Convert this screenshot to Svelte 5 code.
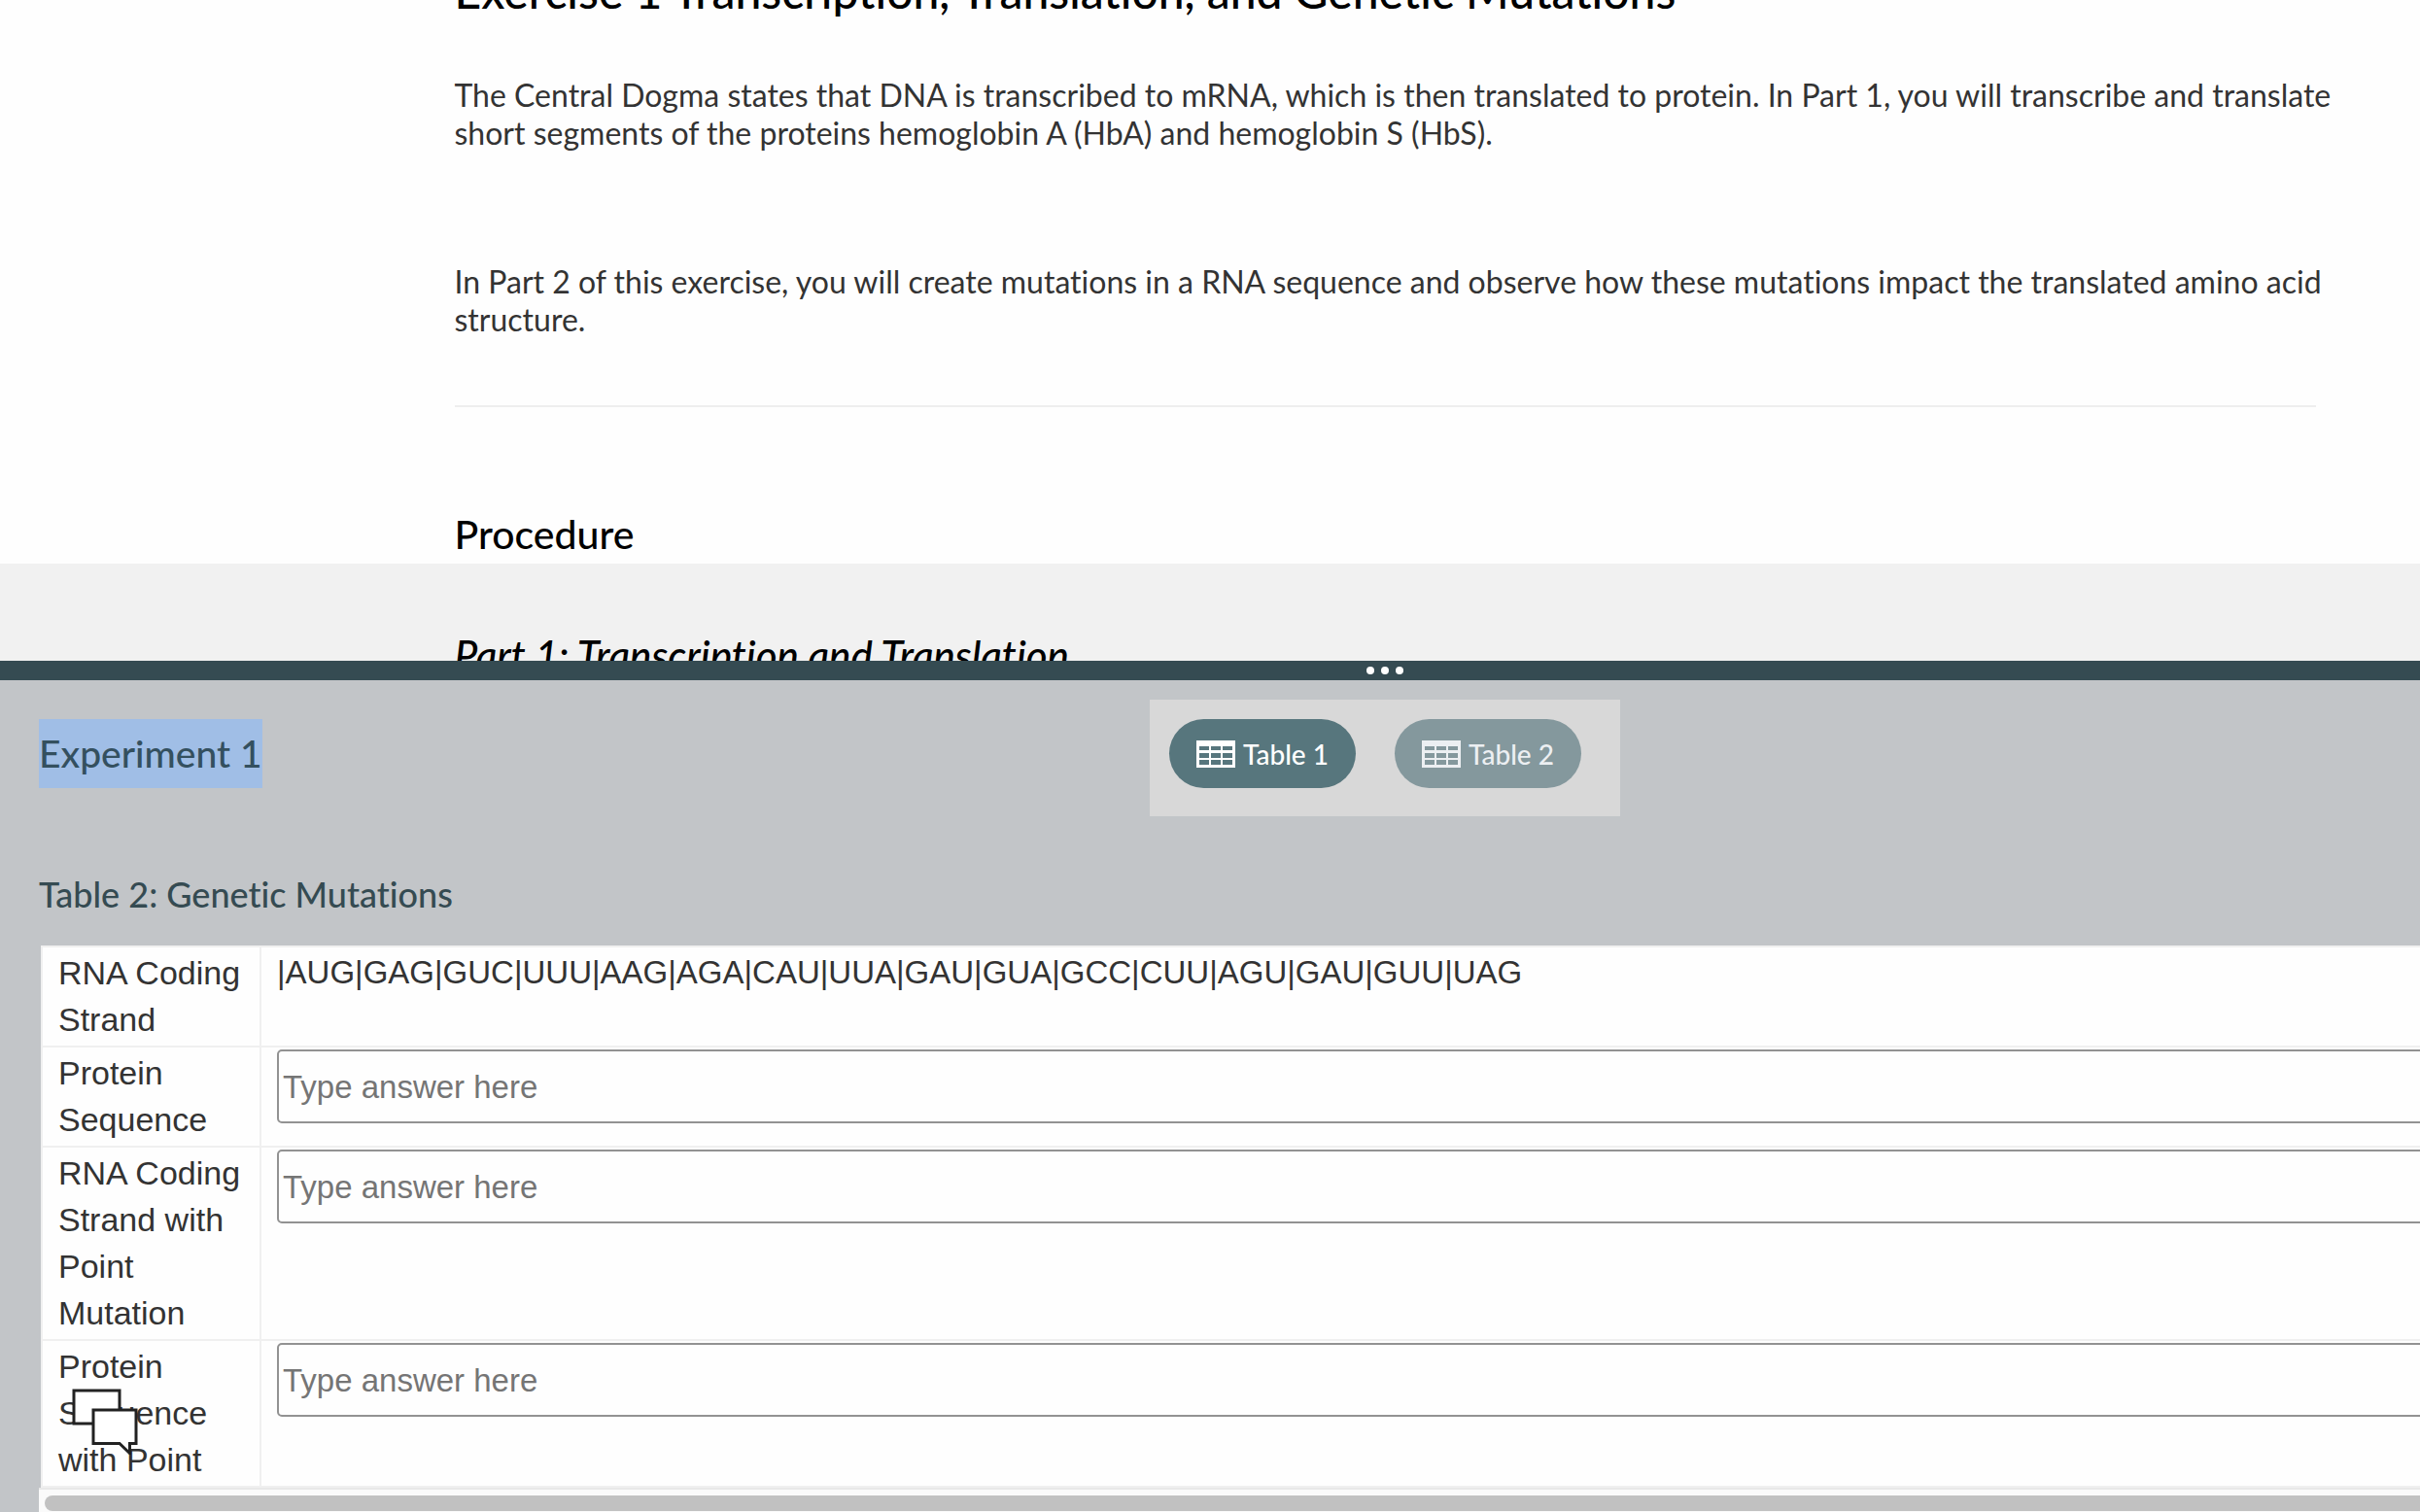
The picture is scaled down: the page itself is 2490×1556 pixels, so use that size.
<script>
	// share of the window height taken by the reading pane
	let split = 43.7;
	let active = 1;

	const tables = [
		{ id: 1, label: 'Table 1' },
		{ id: 2, label: 'Table 2' },
	];

	let rows = [
		{ id: 'coding', label: 'RNA Coding Strand', text: '|AUG|GAG|GUC|UUU|AAG|AGA|CAU|UUA|GAU|GUA|GCC|CUU|AGU|GAU|GUU|UAG' },
		{ id: 'protein', label: 'Protein Sequence', answer: '' },
		{ id: 'point', label: 'RNA Coding Strand with Point Mutation', answer: '' },
		{ id: 'protein-point', label: 'Protein Sequence with Point', answer: '' },
	];
</script>

<div class="window">
	<div class="page">
		<main class="reading" style="height: {split}%">
			<section class="intro">
				<div class="content">
					<h1>Exercise 1 Transcription, Translation, and Genetic Mutations</h1>
					<p>The Central Dogma states that DNA is transcribed to mRNA, which is then translated to protein. In Part 1, you will transcribe and translate short segments of the proteins hemoglobin A (HbA) and hemoglobin S (HbS).</p>
					<p>In Part 2 of this exercise, you will create mutations in a RNA sequence and observe how these mutations impact the translated amino acid structure.</p>
					<hr />
					<h2>Procedure</h2>
				</div>
			</section>
			<section class="part">
				<div class="content">
					<h2><em>Part 1: Transcription and Translation</em></h2>
				</div>
			</section>
		</main>

		<div class="divider">
			<span></span>
			<span></span>
			<span></span>
		</div>

		<section class="lab">
			<header>
				<h2><mark>Experiment 1</mark></h2>
				<div class="tabs">
					{#each tables as t}
						<button class:active={active === t.id} on:click={() => (active = t.id)}>
							<svg viewBox="0 0 40 28" width="40" height="28" aria-hidden="true">
								<path
									fill="currentColor"
									fill-rule="evenodd"
									d="M0 0h40v28H0z
									M3 6v4h10V6z M15 6v4h10V6z M27 6v4h10V6z
									M3 13v5h10v-5z M15 13v5h10v-5z M27 13v5h10v-5z
									M3 20v5h10v-5z M15 20v5h10v-5z M27 20v5h10v-5z"
								/>
							</svg>
							<span>{t.label}</span>
						</button>
					{/each}
				</div>
			</header>

			<h3>Table 2: Genetic Mutations</h3>

			<div class="scroller">
				<div class="view">
					<table>
						<tbody>
							{#each rows as row}
								<tr>
									<th scope="row">
										{#if row.text}
											{row.label}
										{:else}
											<label for={row.id}>{row.label}</label>
										{/if}
									</th>
									<td>
										{#if row.text}
											{row.text}
										{:else}
											<input id={row.id} type="text" placeholder="Type answer here" bind:value={row.answer} />
										{/if}
									</td>
								</tr>
							{/each}
						</tbody>
					</table>
				</div>
				<div class="track"><div class="thumb"></div></div>
			</div>
		</section>
	</div>
</div>

<button class="chat" aria-label="Open chat">
	<svg viewBox="0 0 68 68" width="68" height="68">
		<g fill="#fff" stroke="#222" stroke-width="3">
			<path d="M2 2h47v34H2z" />
			<path d="M22 22h44v34.500h-6.500v10L49 56.500H22z" />
		</g>
	</svg>
</button>

<style>
	.window {
		overflow: hidden;
	}

	/* the app is wider than the window and runs off its right edge */
	.page {
		display: flex;
		flex-direction: column;
		width: calc(100% + 360px);
		height: 100vh;
		font-family: Lato, sans-serif;
		font-variant-ligatures: none;
		color: #333;
	}

	h1, h2, h3, p {
		margin: 0;
		font-weight: 500;
	}

	.reading {
		flex: none;
		display: flex;
		flex-direction: column;
		overflow: hidden;
		background: #f1f1f1;
	}

	.content {
		width: 1915px;
		margin: 0 auto;
	}

	.intro {
		/* scrolled part way past the title */
		margin-top: -38px;
		padding-bottom: 6px;
		background: #fefefe;
	}

	.intro h1 {
		margin-bottom: 58px;
		font-size: 48px;
		line-height: 58px;
		color: #000;
	}

	.intro p {
		margin-right: -40px;
		font-size: 32px;
		line-height: 39px;
		font-weight: 400;
	}
	.intro p + p {
		margin-top: 114px;
	}

	hr {
		height: 2px;
		margin: 69px 0 107px;
		border: 0;
		background: #eee;
	}

	.content h2 {
		font-size: 41px;
		line-height: 48px;
		color: #000;
	}

	.part {
		padding-top: 70px;
	}
	.part em {
		font-size: 42px;
	}

	.divider {
		flex: none;
		display: flex;
		align-items: center;
		justify-content: center;
		gap: 7px;
		height: 20px;
		background: #354b52;
	}
	.divider span {
		width: 8px;
		height: 8px;
		border-radius: 50%;
		background: #fff;
	}

	.lab {
		flex: 1;
		min-height: 0;
		display: flex;
		flex-direction: column;
		padding: 20px 0 0 40px;
		background: #c2c5c8;
	}

	header {
		display: grid;
		grid-template-columns: 1fr auto 1fr;
		align-items: start;
		padding-right: 40px;
	}

	header h2 {
		padding-top: 20px;
		font-size: 39px;
		line-height: 71px;
	}

	mark {
		display: inline-block;
		background: #a0bee6;
		color: #34505f;
	}

	.tabs {
		display: flex;
		gap: 40px;
		padding: 20px 40px 29px 20px;
		background: #d8d8d8;
	}

	.tabs button {
		display: flex;
		align-items: center;
		gap: 8px;
		height: 71px;
		padding: 2px 28px 0;
		border: 0;
		border-radius: 36px;
		background: #84989d;
		color: #eceff2;
		font: 500 28px/34px Lato, sans-serif;
	}
	.tabs button.active {
		background: #57767d;
		color: #fff;
	}

	h3 {
		margin: 50px 0 22px;
		font-size: 36px;
		line-height: 61px;
		color: #354b52;
	}

	.scroller {
		flex: 1;
		min-height: 0;
		display: flex;
		flex-direction: column;
	}

	.view {
		flex: 1;
		min-height: 0;
		overflow: hidden;
		padding-left: 2px;
	}

	table {
		width: 100%;
		border-spacing: 0;
		border-top: 2px solid #f0f0f0;
		border-left: 2px solid #f0f0f0;
		background: #fefefe;
		font-family: 'Liberation Sans', sans-serif;
		font-size: 33px;
		line-height: 48px;
	}

	th, td {
		padding: 2px 16px 3px;
		border-bottom: 2px solid #f0f0f0;
		text-align: left;
		vertical-align: top;
		font-weight: 400;
	}

	th {
		box-sizing: border-box;
		width: 225px;
		border-right: 2px solid #f0f0f0;
		font-size: 34px;
	}

	input {
		display: block;
		box-sizing: border-box;
		width: 100%;
		height: 76px;
		padding: 4px 4px 2px;
		border: 2px solid #929292;
		border-radius: 5px;
		background: #fefefe;
		color: #333;
		font: inherit;
	}
	input::placeholder {
		color: #757575;
		opacity: 1;
	}

	.track {
		flex: none;
		padding: 6px 6px 1px;
		border-top: 2px solid #e8e8e8;
		background: #fafafa;
	}
	.thumb {
		height: 16px;
		border-radius: 8px;
		background: #c1c1c1;
	}

	.chat {
		position: fixed;
		left: 74px;
		bottom: 59px;
		display: flex;
		padding: 0;
		border: 0;
		background: none;
	}
</style>
